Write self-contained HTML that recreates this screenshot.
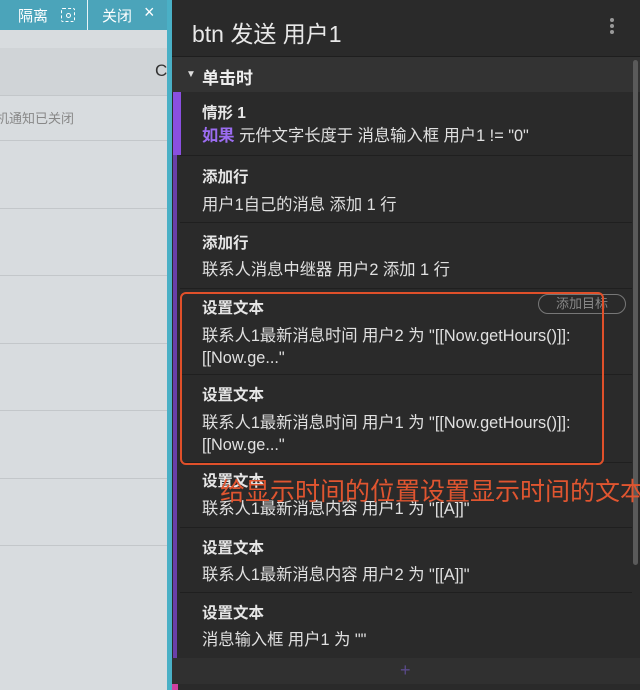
<!DOCTYPE html>
<html><head><meta charset="utf-8"><style>
*{margin:0;padding:0;box-sizing:border-box}
body{width:640px;height:690px;overflow:hidden;position:relative;background:#2a2a2a;font-family:"Liberation Sans","Noto Sans CJK SC",sans-serif}
.abs{position:absolute}
.left{left:0;top:0;width:168px;height:690px;background:#d8dcdf}
.top{left:0;top:0;width:168px;height:30px;background:#4ba4ba;color:#fff;font-size:15px}
.hl{left:0;width:168px;height:1px;background:#c3c7ca}
.strip{left:167px;top:0;width:5px;height:690px;background:#4ab0c6}
.t{color:#e6e6e6;font-size:15.5px;font-weight:bold;left:202px}
.b{color:#e0e0e0;font-size:16.3px;left:202px;line-height:22px;white-space:nowrap}
.sep{left:180px;width:452px;height:1px;background:#1f1f1f}
</style></head><body>
<div class="abs left"></div>
<div class="abs" style="left:0;top:48px;width:168px;height:47px;background:#d0d4d7"></div>
<div class="abs hl" style="top:95px"></div>
<div class="abs hl" style="top:140px"></div>
<div class="abs hl" style="top:208px"></div>
<div class="abs hl" style="top:275px"></div>
<div class="abs hl" style="top:343px"></div>
<div class="abs hl" style="top:410px"></div>
<div class="abs hl" style="top:478px"></div>
<div class="abs hl" style="top:545px"></div>
<div class="abs" style="left:155px;top:61px;font-size:17px;color:#333">C</div>
<div class="abs" style="left:-4px;top:108px;font-size:13px;color:#888">机通知已关闭</div>
<div class="abs top">
<span class="abs" style="left:18px;top:5px">隔离</span>
<span class="abs" style="left:61px;top:8px;width:14px;height:14px;border:1.5px dashed #fff;border-radius:2px"></span>
<span class="abs" style="left:66px;top:13px;width:5px;height:5px;border:1.5px solid #fff;border-radius:50%"></span>
<span class="abs" style="left:87px;top:0;width:1px;height:30px;background:#e8f4f7"></span>
<span class="abs" style="left:102px;top:5px">关闭</span>
<span class="abs" style="left:144px;top:2px;font-size:18px">×</span>
</div>
<div class="abs strip"></div>

<div class="abs" style="left:172px;top:0;width:468px;height:57px;background:#2a2a2a;border-bottom:1px solid #1e1e1e"></div>
<div class="abs" style="left:192px;top:15px;color:#e8e8e8;font-size:23px">btn 发送 用户1</div>
<div class="abs" style="left:610px;top:18px;width:4px;height:4px;border-radius:2px;background:#999;box-shadow:0 6px 0 #999,0 12px 0 #999"></div>
<div class="abs" style="left:172px;top:57px;width:468px;height:35px;background:#333"></div>
<div class="abs" style="left:186px;top:69px;color:#ddd;font-size:10px">▼</div>
<div class="abs" style="left:202px;top:64px;color:#eee;font-size:17px;font-weight:bold">单击时</div>
<div class="abs" style="left:173px;top:92px;width:4px;height:568px;background:#6a3fa8"></div>
<div class="abs" style="left:173px;top:92px;width:8px;height:63px;background:#8a4fe0"></div>
<div class="abs" style="left:633px;top:60px;width:5px;height:505px;border-radius:3px;background:#5a5a5a"></div>

<div class="abs t" style="top:101px">情形 1</div>
<div class="abs b" style="top:125px"><span style="color:#9b6cf0;font-weight:bold">如果</span> 元件文字长度于 消息输入框 用户1 != "0"</div>
<div class="abs sep" style="top:155px"></div>
<div class="abs t" style="top:165px">添加行</div>
<div class="abs b" style="top:194px">用户1自己的消息 添加 1 行</div>
<div class="abs sep" style="top:222px"></div>
<div class="abs t" style="top:231px">添加行</div>
<div class="abs b" style="top:259px">联系人消息中继器 用户2 添加 1 行</div>
<div class="abs sep" style="top:288px"></div>
<div class="abs t" style="top:296px">设置文本</div>
<div class="abs" style="left:538px;top:294px;width:88px;height:20px;border:1px solid #777;border-radius:10px;color:#888;font-size:13px;text-align:center;line-height:18px">添加目标</div>
<div class="abs b" style="top:325px">联系人1最新消息时间 用户2 为 "[[Now.getHours()]]:<br>[[Now.ge..."</div>
<div class="abs sep" style="top:374px"></div>
<div class="abs t" style="top:383px">设置文本</div>
<div class="abs b" style="top:412px">联系人1最新消息时间 用户1 为 "[[Now.getHours()]]:<br>[[Now.ge..."</div>
<div class="abs sep" style="top:462px"></div>
<div class="abs t" style="top:469px">设置文本</div>
<div class="abs b" style="top:498px">联系人1最新消息内容 用户1 为 "[[A]]"</div>
<div class="abs sep" style="top:527px"></div>
<div class="abs t" style="top:536px">设置文本</div>
<div class="abs b" style="top:564px">联系人1最新消息内容 用户2 为 "[[A]]"</div>
<div class="abs sep" style="top:592px"></div>
<div class="abs t" style="top:601px">设置文本</div>
<div class="abs b" style="top:629px">消息输入框 用户1 为 ""</div>
<div class="abs" style="left:172px;top:658px;width:468px;height:26px;background:#303030"></div>
<div class="abs" style="left:400px;top:660px;color:#5a4a8a;font-size:18px">+</div>
<div class="abs" style="left:172px;top:684px;width:6px;height:6px;background:#d040a0"></div>

<div class="abs" style="left:180px;top:292px;width:424px;height:173px;border:2.5px solid #e0502a;border-radius:6px"></div>
<div class="abs" style="left:220px;top:477px;color:#e05530;font-size:25px;white-space:nowrap;line-height:30px">给显示时间的位置设置显示时间的文本</div>
</body></html>
